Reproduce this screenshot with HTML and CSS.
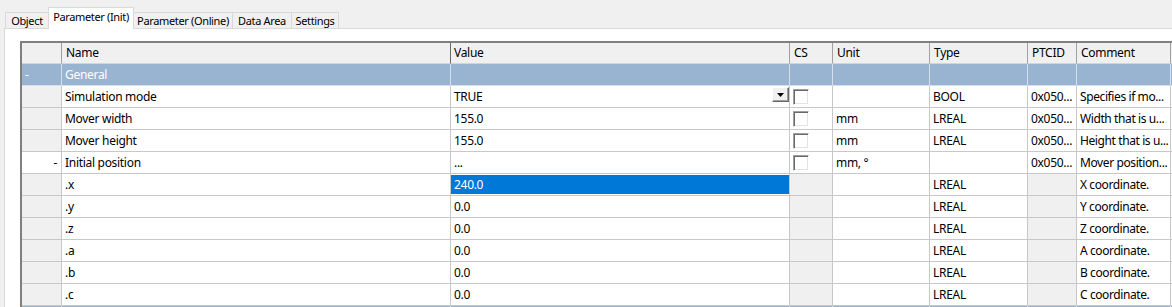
FILE: index.html
```html
<!DOCTYPE html>
<html>
<head>
<meta charset="utf-8">
<link rel="stylesheet" href="styles.css">
</head>
<body>
<div class="tabs">
  <div class="tab t-object">Object</div>
  <div class="tab t-init active">Parameter (Init)</div>
  <div class="tab t-online">Parameter (Online)</div>
  <div class="tab t-data">Data Area</div>
  <div class="tab t-settings">Settings</div>
</div>
<div class="panel">
  <div class="grid">
    <div class="row head">
      <div class="c rh"></div>
      <div class="c name-head">Name</div>
      <div class="c value-head">Value</div>
      <div class="c">CS</div>
      <div class="c">Unit</div>
      <div class="c">Type</div>
      <div class="c">PTCID</div>
      <div class="c">Comment</div>
      <div class="c"></div>
    </div>
    <div class="row group">
      <div class="c rh">-</div>
      <div class="c">General</div>
      <div class="c"></div><div class="c"></div><div class="c"></div><div class="c"></div><div class="c"></div><div class="c"></div><div class="c"></div>
    </div>
    <div class="row">
      <div class="c rh"></div>
      <div class="c">Simulation mode</div>
      <div class="c combo"><span>TRUE</span><span class="drop"><svg width="7" height="4" viewBox="0 0 7 4"><path d="M0 0h7L3.5 4z" fill="#000"/></svg></span></div>
      <div class="c cs"><span class="check"></span></div>
      <div class="c"></div>
      <div class="c">BOOL</div>
      <div class="c">0x050...</div>
      <div class="c cm">Specifies if mo...</div>
      <div class="c"></div>
    </div>
    <div class="row">
      <div class="c rh"></div>
      <div class="c">Mover width</div>
      <div class="c">155.0</div>
      <div class="c cs"><span class="check"></span></div>
      <div class="c">mm</div>
      <div class="c">LREAL</div>
      <div class="c">0x050...</div>
      <div class="c cm">Width that is u...</div>
      <div class="c"></div>
    </div>
    <div class="row">
      <div class="c rh"></div>
      <div class="c">Mover height</div>
      <div class="c">155.0</div>
      <div class="c cs"><span class="check"></span></div>
      <div class="c">mm</div>
      <div class="c">LREAL</div>
      <div class="c">0x050...</div>
      <div class="c cm">Height that is u...</div>
      <div class="c"></div>
    </div>
    <div class="row">
      <div class="c rh open">-</div>
      <div class="c">Initial position</div>
      <div class="c">...</div>
      <div class="c cs"><span class="check"></span></div>
      <div class="c">mm, °</div>
      <div class="c"></div>
      <div class="c">0x050...</div>
      <div class="c cm">Mover position...</div>
      <div class="c"></div>
    </div>
    <div class="row">
      <div class="c rh"></div>
      <div class="c">.x</div>
      <div class="c selected">240.0</div>
      <div class="c ro"></div>
      <div class="c"></div>
      <div class="c">LREAL</div>
      <div class="c ro"></div>
      <div class="c cm">X coordinate.</div>
      <div class="c"></div>
    </div>
    <div class="row">
      <div class="c rh"></div>
      <div class="c">.y</div>
      <div class="c">0.0</div>
      <div class="c ro"></div>
      <div class="c"></div>
      <div class="c">LREAL</div>
      <div class="c ro"></div>
      <div class="c cm">Y coordinate.</div>
      <div class="c"></div>
    </div>
    <div class="row">
      <div class="c rh"></div>
      <div class="c">.z</div>
      <div class="c">0.0</div>
      <div class="c ro"></div>
      <div class="c"></div>
      <div class="c">LREAL</div>
      <div class="c ro"></div>
      <div class="c cm">Z coordinate.</div>
      <div class="c"></div>
    </div>
    <div class="row">
      <div class="c rh"></div>
      <div class="c">.a</div>
      <div class="c">0.0</div>
      <div class="c ro"></div>
      <div class="c"></div>
      <div class="c">LREAL</div>
      <div class="c ro"></div>
      <div class="c cm">A coordinate.</div>
      <div class="c"></div>
    </div>
    <div class="row">
      <div class="c rh"></div>
      <div class="c">.b</div>
      <div class="c">0.0</div>
      <div class="c ro"></div>
      <div class="c"></div>
      <div class="c">LREAL</div>
      <div class="c ro"></div>
      <div class="c cm">B coordinate.</div>
      <div class="c"></div>
    </div>
    <div class="row">
      <div class="c rh"></div>
      <div class="c">.c</div>
      <div class="c">0.0</div>
      <div class="c ro"></div>
      <div class="c"></div>
      <div class="c">LREAL</div>
      <div class="c ro"></div>
      <div class="c cm">C coordinate.</div>
      <div class="c"></div>
    </div>
    <div class="row group">
      <div class="c rh"></div>
      <div class="c"></div>
      <div class="c"></div><div class="c"></div><div class="c"></div><div class="c"></div><div class="c"></div><div class="c"></div><div class="c"></div>
    </div>
  </div>
</div>
</body>
</html>
```

FILE: styles.css
```css
html, body {
  margin: 0;
  padding: 0;
}
body {
  width: 1172px;
  height: 307px;
  overflow: hidden;
  background: #f0f0f0;
  font-family: "Noto Sans", "Segoe UI", sans-serif;
  font-size: 12px;
  letter-spacing: -0.3px;
  color: #000;
}

/* Tabs */
.tabs {
  display: flex;
  align-items: flex-end;
  height: 28px;
  padding-left: 5px;
}
.tab {
  box-sizing: border-box;
  height: 16px;
  line-height: 15px;
  padding: 0;
  text-align: center;
  font-size: 11px;
  letter-spacing: -0.35px;
  border: 1px solid #d9d9d9;
  border-bottom: 0;
  background: #f0f0f0;
  white-space: nowrap;
}
.tab + .tab {
  margin-left: -1px;
}
.t-object { width: 44px; }
.t-init { width: 86px; }
.t-online { width: 100px; }
.t-data { width: 60px; }
.t-settings { width: 48px; }
.tab.active {
  height: 22px;
  line-height: 17px;
  background: #fff;
  position: relative;
  z-index: 1;
  margin-bottom: -1px;
}

/* Panel */
.panel {
  margin-left: 4px;
  border-top: 1px solid #d9d9d9;
  border-left: 1px solid #d9d9d9;
  background: #fff;
  padding: 12px 0 0 15px;
  height: 300px;
}

/* Grid */
.grid {
  width: max-content;
  border-left: 2px solid #7f7f7f;
  border-top: 2px solid #7f7f7f;
}
.row {
  display: grid;
  grid-template-columns: 40px 389px 339px 43px 97px 98px 49px 94px 200px;
  height: 22px;
}
.c {
  box-sizing: border-box;
  border-right: 1px solid #c8c8c8;
  border-bottom: 1px solid #c8c8c8;
  padding: 0 3px;
  line-height: 21px;
  white-space: nowrap;
  overflow: hidden;
  text-overflow: ellipsis;
  background: #fff;
}
.c.cm {
  padding-right: 0;
  letter-spacing: -0.4px;
}
.rh {
  background: #f0f0f0;
}
.rh.open {
  background: #fff;
  text-align: right;
  padding-right: 4px;
}
.ro {
  background: #f0f0f0;
}

/* Header */
.row.head {
  height: 21px;
}
.head .c {
  background: #f0f0f0;
  border-right-color: #a0a0a0;
  border-bottom-color: #d4d4d4;
  line-height: 20px;
  padding-left: 4px;
}
.head .name-head {
  border-right: 1px solid #696969;
}
.head .value-head {
  padding-left: 3px;
}

/* Group row */
.group .c {
  background: #99b4d1;
  color: #fff;
  border-right-color: #d6e0eb;
  border-bottom-color: #d6e0eb;
}

/* Combo */
.combo {
  display: flex;
  justify-content: space-between;
  align-items: flex-start;
  padding-right: 0;
}
.drop {
  box-sizing: border-box;
  width: 17px;
  height: 15px;
  margin-top: 1px;
  background: #f0f0f0;
  border: 1px solid;
  border-color: #fff #696969 #696969 #fff;
  box-shadow: inset -1px -1px 0 #a0a0a0;
  display: flex;
  align-items: center;
  justify-content: center;
}
.drop svg {
  display: block;
  margin-top: 1px;
}

/* Checkbox */
.cs {
  display: flex;
  align-items: center;
}
.check {
  box-sizing: border-box;
  width: 16px;
  height: 16px;
  border: 1px solid;
  border-color: #a0a0a0 #fff #fff #a0a0a0;
  box-shadow: inset 1px 1px 0 #696969, inset -1px -1px 0 #e3e3e3;
  background: #fff;
}

/* Selection */
.selected {
  background: #0078d7;
  color: #fff;
  box-shadow: inset 0 1px 0 #fff, inset 0 -1px 0 #fff;
}
```
